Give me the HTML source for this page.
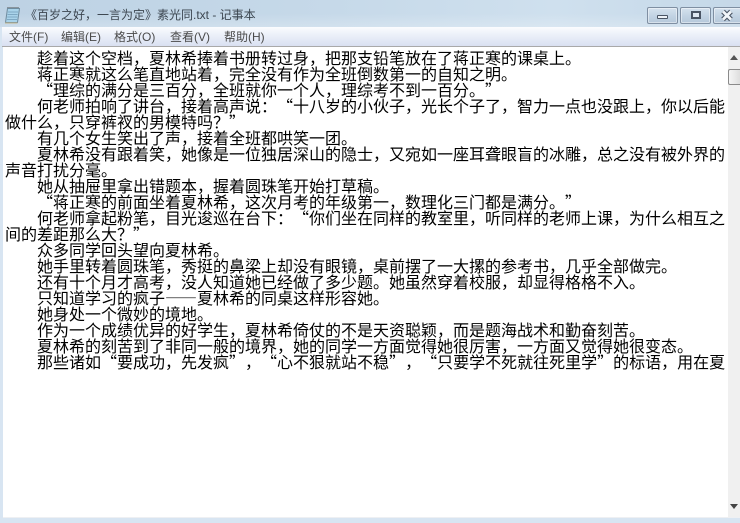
<!DOCTYPE html>
<html lang="zh">
<head>
<meta charset="utf-8">
<title>记事本</title>
<style>
html,body{margin:0;padding:0;width:740px;height:523px;overflow:hidden;background:#d8e5f2;}
body{position:relative;font-family:"Liberation Sans","Noto Sans CJK SC",sans-serif;}
.abs{position:absolute;}
#tb{left:0;top:0;width:740px;height:27px;background:linear-gradient(180deg,rgba(255,255,255,0) 50%,rgba(255,255,255,.22) 100%),linear-gradient(90deg,#bdd2e4 0%,#c6d9e9 45%,#cfe0ee 75%,#c5d8e8 100%);}
#title{left:25px;top:7px;font-size:12px;line-height:16px;color:#3c4650;white-space:nowrap;}
#mb{left:2px;top:27px;width:738px;height:19px;background:linear-gradient(180deg,#fbfcfe 0%,#eef2fa 35%,#d9e0f1 100%);border-bottom:1px solid #a9a9a9;}
.m{position:absolute;top:29px;font-size:12px;line-height:16px;color:#4a4a4a;white-space:nowrap;}
.btn{position:absolute;top:7px;height:15px;border:1px solid #7f8fa2;border-radius:2px;background:linear-gradient(180deg,#d5e2ee 0%,#c3d4e4 50%,#b5c8da 100%);box-shadow:inset 0 0 0 1px rgba(255,255,255,.45);}
#content{left:3px;top:47px;width:725px;height:470px;background:#fff;overflow:hidden;}
.l{position:absolute;left:2px;height:16px;font-family:"WenQuanYi Zen Hei","Noto Sans CJK SC",sans-serif;font-size:16px;line-height:16px;color:#000;white-space:nowrap;}
.i{left:34px;}
.o,.c{display:inline-block;width:16px;}
.o{text-align:right;}
.c{text-align:left;}
#sb{left:728px;top:47px;width:12px;height:470px;background:#f0f0f0;}
#th{left:728px;top:69px;width:12px;height:14px;border:1px solid #8a8a8a;border-right:0;border-radius:2px 0 0 2px;background:linear-gradient(90deg,#f5f5f5,#dcdcdc);box-sizing:content-box;}
</style>
</head>
<body>
<div class="abs" id="tb"></div>
<svg class="abs" style="left:4px;top:6px" width="17" height="18" viewBox="0 0 17 18">
<path d="M3.5 2.5H15.5L13.5 16.5H1.5Z" fill="#a9d3ea" stroke="#6f8c9f"/>
<path d="M4 6H14M3.6 8.5H13.6M3.3 11H13.3M3 13.5H13" stroke="#7fa9c4" stroke-width="1"/>
<path d="M4 2V1M6 2V1M8 2V1M10 2V1M12 2V1M14 2V1" stroke="#555" stroke-width="1"/>
<path d="M1 17H13.5" stroke="#c2b48a" stroke-width="1"/>
</svg>
<div class="abs" id="title">《百岁之好，一言为定》素光同.txt - 记事本</div>

<div class="abs" id="mb"></div>
<div class="m" style="left:9px">文件(F)</div>
<div class="m" style="left:61px">编辑(E)</div>
<div class="m" style="left:114px">格式(O)</div>
<div class="m" style="left:170px">查看(V)</div>
<div class="m" style="left:224px">帮助(H)</div>

<div class="btn" style="left:647px;width:29px"><div class="abs" style="left:9px;top:7px;width:9px;height:2px;border:1px solid #4a5564;background:#eef3f8;border-radius:1px"></div></div>
<div class="btn" style="left:680px;width:29px"><div class="abs" style="left:10px;top:3px;width:6px;height:4px;border:2px solid #4a5564;background:#dfe8f1"></div></div>
<div class="btn" style="left:713px;width:30px;"><svg class="abs" style="left:5px;top:1px" width="16" height="13" viewBox="0 0 16 13"><path d="M4 2.5L12 10.5M12 2.5L4 10.5" stroke="#4a5564" stroke-width="5"/><path d="M4 2.5L12 10.5M12 2.5L4 10.5" stroke="#f2f6fa" stroke-width="2.8"/></svg></div>

<div class="abs" id="content">
<div class="l i" style="top:2px">趁着这个空档，夏林希捧着书册转过身，把那支铅笔放在了蒋正寒的课桌上。</div>
<div class="l i" style="top:18px">蒋正寒就这么笔直地站着，完全没有作为全班倒数第一的自知之明。</div>
<div class="l i" style="top:34px"><span class="o">“</span>理综的满分是三百分，全班就你一个人，理综考不到一百分。<span class="c">”</span></div>
<div class="l i" style="top:50px">何老师拍响了讲台，接着高声说：<span class="o">“</span>十八岁的小伙子，光长个子了，智力一点也没跟上，你以后能</div>
<div class="l" style="top:66px">做什么，只穿裤衩的男模特吗？<span class="c">”</span></div>
<div class="l i" style="top:82px">有几个女生笑出了声，接着全班都哄笑一团。</div>
<div class="l i" style="top:98px">夏林希没有跟着笑，她像是一位独居深山的隐士，又宛如一座耳聋眼盲的冰雕，总之没有被外界的</div>
<div class="l" style="top:114px">声音打扰分毫。</div>
<div class="l i" style="top:130px">她从抽屉里拿出错题本，握着圆珠笔开始打草稿。</div>
<div class="l i" style="top:146px"><span class="o">“</span>蒋正寒的前面坐着夏林希，这次月考的年级第一，数理化三门都是满分。<span class="c">”</span></div>
<div class="l i" style="top:162px">何老师拿起粉笔，目光逡巡在台下：<span class="o">“</span>你们坐在同样的教室里，听同样的老师上课，为什么相互之</div>
<div class="l" style="top:178px">间的差距那么大？<span class="c">”</span></div>
<div class="l i" style="top:194px">众多同学回头望向夏林希。</div>
<div class="l i" style="top:210px">她手里转着圆珠笔，秀挺的鼻梁上却没有眼镜，桌前摆了一大摞的参考书，几乎全部做完。</div>
<div class="l i" style="top:226px">还有十个月才高考，没人知道她已经做了多少题。她虽然穿着校服，却显得格格不入。</div>
<div class="l i" style="top:242px">只知道学习的疯子——夏林希的同桌这样形容她。</div>
<div class="l i" style="top:258px">她身处一个微妙的境地。</div>
<div class="l i" style="top:274px">作为一个成绩优异的好学生，夏林希倚仗的不是天资聪颖，而是题海战术和勤奋刻苦。</div>
<div class="l i" style="top:290px">夏林希的刻苦到了非同一般的境界，她的同学一方面觉得她很厉害，一方面又觉得她很变态。</div>
<div class="l i" style="top:306px">那些诸如<span class="o">“</span>要成功，先发疯<span class="c">”</span>，<span class="o">“</span>心不狠就站不稳<span class="c">”</span>，<span class="o">“</span>只要学不死就往死里学<span class="c">”</span>的标语，用在夏</div>
</div>

<div class="abs" id="sb"></div>
<div class="abs" id="th"></div>
<svg class="abs" style="left:728px;top:54px" width="12" height="8" viewBox="0 0 12 8"><path d="M6 1L10 6H2Z" fill="#555"/></svg>
<svg class="abs" style="left:728px;top:503px" width="12" height="8" viewBox="0 0 12 8"><path d="M6 6L10 1H2Z" fill="#444"/></svg>
<div class="abs" style="left:3px;top:517px;width:737px;height:1px;background:#eef0f3"></div>
</body>
</html>
